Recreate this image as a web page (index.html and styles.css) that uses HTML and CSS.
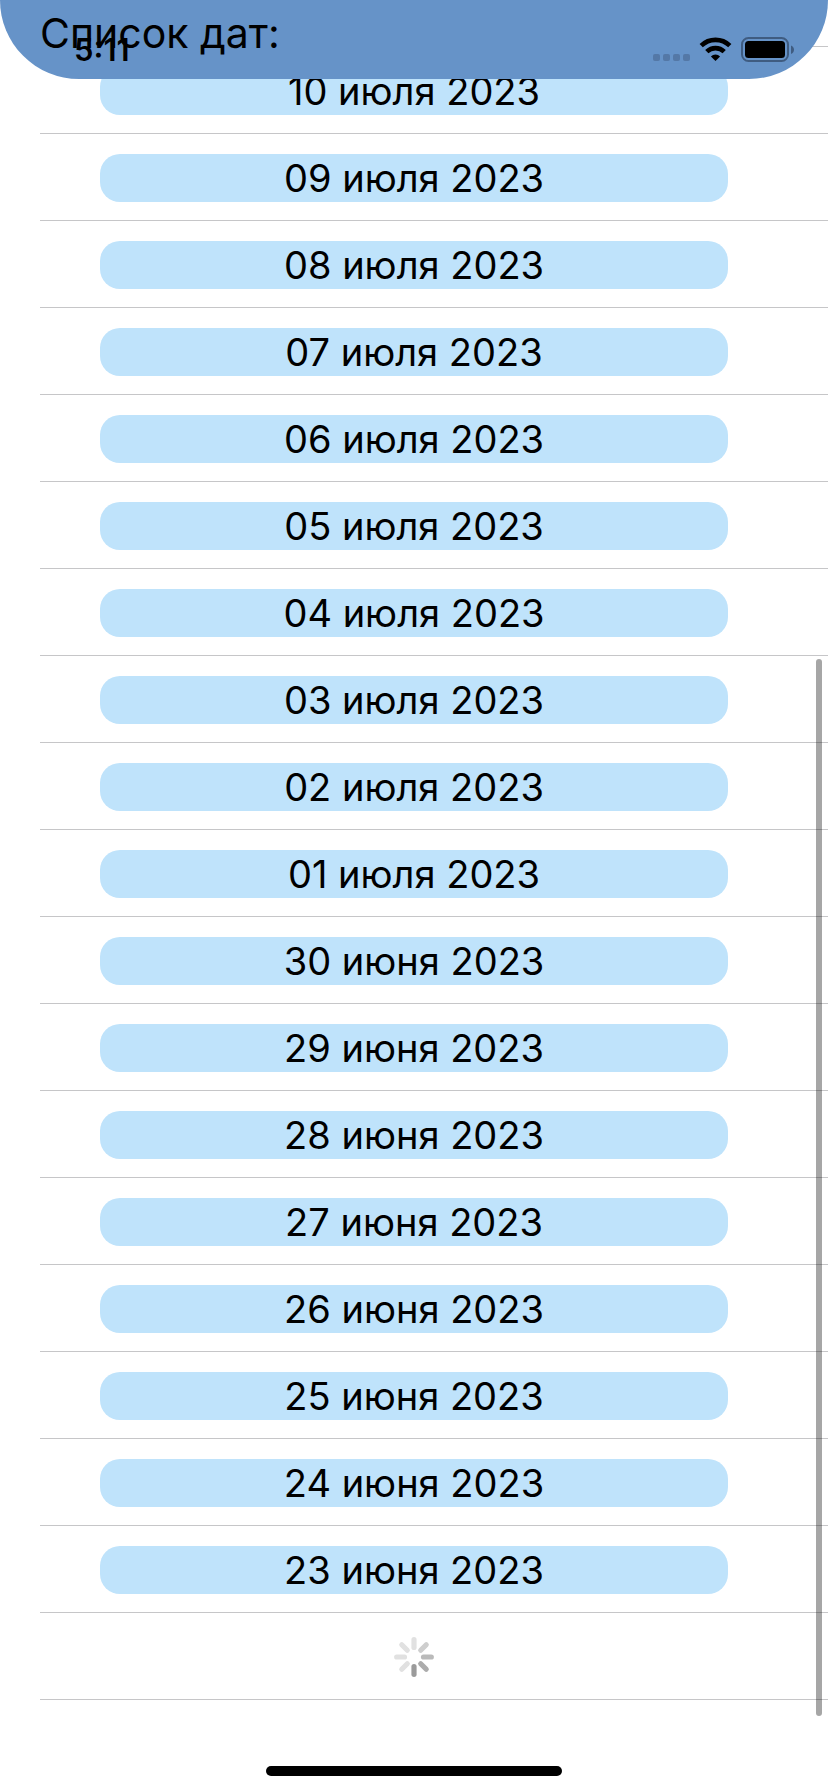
FILE: index.html
```html
<!DOCTYPE html>
<html lang="ru">
<head>
<meta charset="utf-8">
<meta name="viewport" content="width=device-width, initial-scale=1">
<title>Список дат</title>
<link rel="stylesheet" href="styles.css">
</head>
<body>
<header class="header">
  <h1 class="title">Список дат:</h1>
  <div class="status">
    <span class="time">5:11</span>
    <svg class="status-icons" width="142" height="26" viewBox="0 0 142 26" aria-hidden="true">
      <g fill="#5478a6"><rect x="0" y="17" width="7" height="7" rx="2"/><rect x="10" y="17" width="7" height="7" rx="2"/><rect x="20" y="17" width="7" height="7" rx="2"/><rect x="30" y="17" width="7" height="7" rx="2"/></g>
      <g fill="none" stroke="#000" stroke-width="4.6"><path d="M48.2 8.7A20.5 20.5 0 0 1 76.8 8.7"/><path d="M53.8 14.7A12.4 12.4 0 0 1 71.2 14.7"/></g>
      <path d="M62.5 24L57.9 19.4A6.6 6.6 0 0 1 67.1 19.4Z"/>
      <rect x="89" y="1" width="46" height="23" rx="6.5" fill="none" stroke="#3f5c81" stroke-width="2"/>
      <rect x="92" y="4" width="40" height="17" rx="3.5"/>
      <path d="M138 8.5C142 10 142 15.500 138 17Z" fill="#3f5c81"/>
    </svg>
  </div>
</header>
<main class="content">
  <ul class="dates">
    <li class="row"><button class="date">10 июля 2023</button></li>
    <li class="row"><button class="date">09 июля 2023</button></li>
    <li class="row"><button class="date">08 июля 2023</button></li>
    <li class="row"><button class="date">07 июля 2023</button></li>
    <li class="row"><button class="date">06 июля 2023</button></li>
    <li class="row"><button class="date">05 июля 2023</button></li>
    <li class="row"><button class="date">04 июля 2023</button></li>
    <li class="row"><button class="date">03 июля 2023</button></li>
    <li class="row"><button class="date">02 июля 2023</button></li>
    <li class="row"><button class="date">01 июля 2023</button></li>
    <li class="row"><button class="date">30 июня 2023</button></li>
    <li class="row"><button class="date">29 июня 2023</button></li>
    <li class="row"><button class="date">28 июня 2023</button></li>
    <li class="row"><button class="date">27 июня 2023</button></li>
    <li class="row"><button class="date">26 июня 2023</button></li>
    <li class="row"><button class="date">25 июня 2023</button></li>
    <li class="row"><button class="date">24 июня 2023</button></li>
    <li class="row"><button class="date">23 июня 2023</button></li>
    <li class="row row-loading">
      <svg width="48" height="48" viewBox="-24 -24 48 48" fill="none" stroke-width="5.200" stroke-linecap="round" role="img" aria-label="Загрузка">
        <path d="M0-9.500V-17.300" stroke="#e1e1e1"/>
        <path d="M0-9.500V-17.300" stroke="#cecece" transform="rotate(45)"/>
        <path d="M0-9.500V-17.300" stroke="#bababa" transform="rotate(90)"/>
        <path d="M0-9.500V-17.300" stroke="#acacac" transform="rotate(135)"/>
        <path d="M0-9.500V-17.300" stroke="#9b9b9b" transform="rotate(180)"/>
        <path d="M0-9.500V-17.300" stroke="#e1e1e1" transform="rotate(225)"/>
        <path d="M0-9.500V-17.300" stroke="#e1e1e1" transform="rotate(270)"/>
        <path d="M0-9.500V-17.300" stroke="#e1e1e1" transform="rotate(315)"/>
      </svg>
    </li>
  </ul>
</main>
<div class="scrollbar"></div>
<div class="home-indicator"></div>
</body>
</html>
```
FILE: styles.css
```css
* {
  box-sizing: border-box;
}

body {
  margin: 0;
  background: #fff;
  color: #000;
  font-family: Inter, "Liberation Sans", sans-serif;
}

.header {
  position: relative;
  z-index: 1;
  height: 79px;
  padding: 6px 40px;
  background: #6693c8;
  border-radius: 0 0 80px 80px;
}

.title {
  margin: 0;
  font-size: 41px;
  font-weight: 400;
  line-height: 54px;
}

.status {
  position: absolute;
  inset: 32px 33px auto 74px;
  display: flex;
  align-items: center;
  justify-content: space-between;
  height: 36px;
}

.time {
  font-size: 31px;
  font-weight: 600;
  line-height: 36px;
}

.content {
  margin-top: -33px;
}

.dates {
  margin: 0;
  padding: 0 0 0 40px;
  list-style: none;
}

.row {
  padding: 20px 100px 18px 60px;
  border-bottom: 1px solid #c6c6c8;
}

.row:first-child {
  border-top: 1px solid #c6c6c8;
}

.date {
  display: block;
  width: 100%;
  height: 48px;
  padding: 0;
  border: 0;
  border-radius: 20px;
  background: #bfe3fb;
  color: inherit;
  font-family: inherit;
  font-size: 38px;
  line-height: 48px;
  text-align: center;
}

.row-loading {
  display: flex;
  justify-content: center;
}

.scrollbar {
  position: fixed;
  top: 659px;
  right: 6px;
  bottom: 76px;
  width: 6px;
  border-radius: 3px;
  background: rgba(0, 0, 0, 0.35);
}

.home-indicator {
  position: fixed;
  right: 0;
  bottom: 16px;
  left: 0;
  width: 296px;
  height: 10px;
  margin: 0 auto;
  border-radius: 5px;
  background: #000;
}
```
